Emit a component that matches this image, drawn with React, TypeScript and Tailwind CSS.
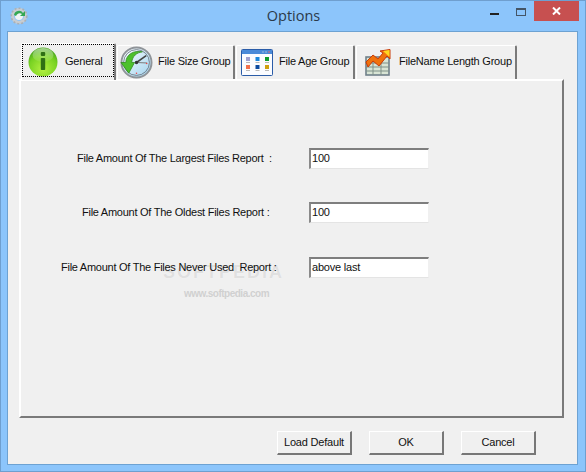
import React from "react";

const font = { fontFamily: '"Liberation Sans", Arial, sans-serif' };

function Gear() {
  return (
    <svg width="18" height="18" viewBox="0 0 18 18">
      <circle cx="9" cy="9" r="6.5" fill="none" stroke="#c8ccd0" strokeWidth="3" />
      <circle cx="9" cy="9" r="7.8" fill="none" stroke="#aab0b6" strokeWidth="1.6" strokeDasharray="2 2" />
      <circle cx="9" cy="9" r="4" fill="#f0f4f4" />
      <path d="M4 8 A5 5 0 0 1 13 6 L15 4 L15 9 L10 9 L12 7 A4 4 0 0 0 6 9 Z" fill="#35a853" />
    </svg>
  );
}

function InfoIcon() {
  return (
    <svg width="30" height="30" viewBox="0 0 30 30">
      <defs>
        <radialGradient id="g1" cx="50%" cy="75%" r="70%">
          <stop offset="0%" stopColor="#b4f040" />
          <stop offset="70%" stopColor="#78d222" />
          <stop offset="100%" stopColor="#4aa81e" />
        </radialGradient>
        <linearGradient id="g2" x1="0" y1="0" x2="0" y2="1">
          <stop offset="0%" stopColor="#ffffff" stopOpacity="0.5" />
          <stop offset="100%" stopColor="#ffffff" stopOpacity="0.05" />
        </linearGradient>
      </defs>
      <circle cx="15" cy="15" r="14.5" fill="url(#g1)" />
      <ellipse cx="15" cy="8" rx="10.5" ry="7" fill="url(#g2)" />
      <rect x="12.8" y="5" width="4.4" height="4" rx="1" fill="#2f7014" />
      <rect x="12.8" y="11" width="4.4" height="12" rx="0.8" fill="#2f7014" />
    </svg>
  );
}

function ClockIcon() {
  return (
    <svg width="33" height="33" viewBox="0 0 34 34">
      <defs>
        <linearGradient id="c1" x1="0" y1="0" x2="1" y2="1">
          <stop offset="0%" stopColor="#ffffff" />
          <stop offset="100%" stopColor="#9fd2ee" />
        </linearGradient>
      </defs>
      <circle cx="17" cy="17" r="15.5" fill="url(#c1)" stroke="#8f9499" strokeWidth="2" />
      <circle cx="17" cy="17" r="13.3" fill="none" stroke="#5d6670" strokeWidth="0.8" />
      <path d="M17 17 L27 10" stroke="#444" strokeWidth="1.6" />
      <path d="M17 17 L28 17.5" stroke="#777" strokeWidth="1" />
      <circle cx="17" cy="17" r="1.8" fill="#333" />
      <circle cx="27.5" cy="18" r="0.8" fill="#e44" />
      <circle cx="17" cy="28" r="0.8" fill="#e44" />
      <path d="M6 17 C6 9 14 4 23 6 C17 7 13 10 12 17 L15 17 L9 28 L1 17 Z" fill="#4cc02c" stroke="#2f8a1c" strokeWidth="0.8" />
    </svg>
  );
}

function GridIcon() {
  const colors = ["#a0a0d0", "#1a86dc", "#0d9c2c", "#f4704c", "#0c4aa0", "#d0a010"];
  return (
    <svg width="32" height="27" viewBox="0 0 32 27">
      <rect x="0.5" y="0.5" width="31" height="26" rx="1" fill="#fbfcff" stroke="#2a5ca8" />
      <rect x="1" y="1" width="30" height="4" fill="#4a8ad8" />
      <circle cx="22" cy="3" r="0.7" fill="#bcd" />
      <circle cx="25" cy="3" r="0.7" fill="#bcd" />
      <circle cx="28" cy="3" r="0.8" fill="#e66" />
      {colors.map((c, i) => {
        const x = 5 + (i % 3) * 9.5;
        const y = 8 + Math.floor(i / 3) * 8;
        return (
          <g key={i}>
            <rect x={x} y={y} width="4" height="4" fill={c} />
            <rect x={x} y={y + 5} width="4" height="1" fill="#b8b8b8" />
          </g>
        );
      })}
    </svg>
  );
}

function ChartIcon() {
  return (
    <svg width="26" height="27" viewBox="0 0 26 27">
      <rect x="1" y="8" width="23" height="18" fill="#d8e4d4" stroke="#70808a" strokeWidth="1.6" />
      <path d="M1 14 H24 M1 18 H24 M1 22 H24 M8 10 V26 M16 10 V26" stroke="#7f9088" strokeWidth="1" />
      <path d="M1 13 L8 6 L13 10 L18 4 L15 2 L25 0.5 L25 10 L22 7 L14 17 L8 12 L3 18 Z" fill="#f0720c" stroke="#c83a08" strokeWidth="1" />
      <path d="M18 2 L24.5 1 L24.5 8 Z" fill="#ffd820" />
    </svg>
  );
}

function Tab({ label, icon, w, gap, selected, iconLeft }: { label: string; icon: React.ReactNode; w: string; gap: string; selected?: boolean; iconLeft: string }) {
  return (
    <div className={`flex items-center shrink-0 box-border border-l border-t border-r-2 border-l-white border-t-white border-r-[#7a7a7a] rounded-t-[2px] bg-[#f0f0f0] ${w} ${selected ? "h-[37px] mb-[-1px] relative z-10" : "h-[34px]"}`}>
      <div className={`flex items-center h-full ${iconLeft} ${gap}`}>
        {icon}
        <span className="whitespace-pre pb-[2px]">{label}</span>
      </div>
    </div>
  );
}

function Row({ label, value, ml, mt }: { label: string; value: string; ml: string; mt: string }) {
  return (
    <div className={`relative z-10 flex items-center h-[21px] ${mt}`}>
      <div className="w-[288px] shrink-0">
        <span className={`block whitespace-pre text-[11px] tracking-[-0.26px] text-[#111] ${ml}`}>{label}</span>
      </div>
      <div className="w-[120px] h-[21px] box-border border-t-2 border-l-2 border-t-[#7e7e7e] border-l-[#8a8a8a] border-r border-b border-r-[#f0f0f0] border-b-[#e4e4e4] bg-white pl-[1px] pb-[2px] flex items-center text-[11px] tracking-[-0.2px] text-[#111]">
        {value}
      </div>
    </div>
  );
}

function Btn({ label }: { label: string }) {
  return (
    <div className="w-[75px] h-[24px] box-border border-t border-l border-t-white border-l-white border-r-2 border-b-2 border-r-[#777] border-b-[#777] bg-[#f0f0f0] flex items-center justify-center text-[11px] tracking-[-0.2px] text-[#111]">
      {label}
    </div>
  );
}

export default function App() {
  return (
    <div style={font} className="w-[586px] h-[472px] box-border border border-[#6f9fcf] bg-[#8cc5fb] flex flex-col overflow-hidden">
      <div className="h-[30px] shrink-0 flex items-start relative">
        <div className="absolute left-[9px] top-[6px]"><Gear /></div>
        <div className="flex-1 text-center text-[14.5px] leading-[29px] text-[#2b3a4a] pl-[1px]" style={{ fontFamily: '"Open Sans", sans-serif' }}>
          Options
        </div>
        <div className="absolute left-[489px] top-[12px] w-[9px] h-[2px] bg-[#222]" />
        <div className="absolute left-[515px] top-[7px] w-[10px] h-[8px] border border-[#445566] border-t-2 box-border" />
        <div className="absolute left-[533px] top-0 w-[45px] h-[20px] bg-[#c75050] flex items-center justify-center">
          <svg width="9" height="8" viewBox="0 0 9 8"><path d="M1 0.5 L8 7.5 M8 0.5 L1 7.5" stroke="#fff" strokeWidth="2" /></svg>
        </div>
      </div>

      <div className="ml-[6px] mr-[7px] h-[434px] box-border border border-[#6da2d2] bg-[#f0f0f0] pl-[11px] pr-[14px] pt-[10px] flex flex-col relative">
        <div className="flex items-end h-[37px] pl-[2px] text-[11px] tracking-[-0.22px] text-[#111] gap-[1px]">
          <div className="relative">
            <Tab selected label="General" w="w-[95px]" gap="gap-[7px]" iconLeft="pl-[6px]" icon={<InfoIcon />} />
            <div className="absolute left-[1px] top-[1px] right-[2px] bottom-[2px] border border-dotted border-black pointer-events-none z-20" />
          </div>
          <Tab label="File Size Group" w="w-[118px]" gap="gap-[5px]" iconLeft="pl-[2px]" icon={<ClockIcon />} />
          <Tab label="File Age Group" w="w-[119px]" gap="gap-[6px]" iconLeft="pl-[4px]" icon={<GridIcon />} />
          <Tab label="FileName Length Group" w="w-[161px]" gap="gap-[8px]" iconLeft="pl-[8px]" icon={<ChartIcon />} />
        </div>

        <div className="w-[545px] h-[339px] box-border border-l-2 border-t-2 border-l-white border-t-white border-r-2 border-b-2 border-r-[#7a7a7a] border-b-[#7a7a7a] bg-[#f0f0f0] pt-[67px] relative">
          <div className="absolute left-[142px] top-[176px] text-[18px] leading-[30px] font-bold tracking-[2px] text-[#e0e0e0] [text-shadow:0_0_1px_#fff]">SOFTPEDIA</div>
          <div className="absolute left-[163px] top-[205px] text-[10px] font-bold tracking-[-0.5px] text-[#d0d0d0]">www.softpedia.com</div>
          <Row label="File Amount Of The Largest Files Report  :" value="100" ml="ml-[56px]" mt="" />
          <Row label="File Amount Of The Oldest Files Report :" value="100" ml="ml-[61px]" mt="mt-[33px]" />
          <Row label="File Amount Of The Files Never Used  Report :" value="above last" ml="ml-[40px]" mt="mt-[34px]" />
        </div>

        <div className="flex gap-[17px] mt-[13px] ml-[258px]">
          <Btn label="Load Default" />
          <Btn label="OK" />
          <Btn label="Cancel" />
        </div>
      </div>
    </div>
  );
}
